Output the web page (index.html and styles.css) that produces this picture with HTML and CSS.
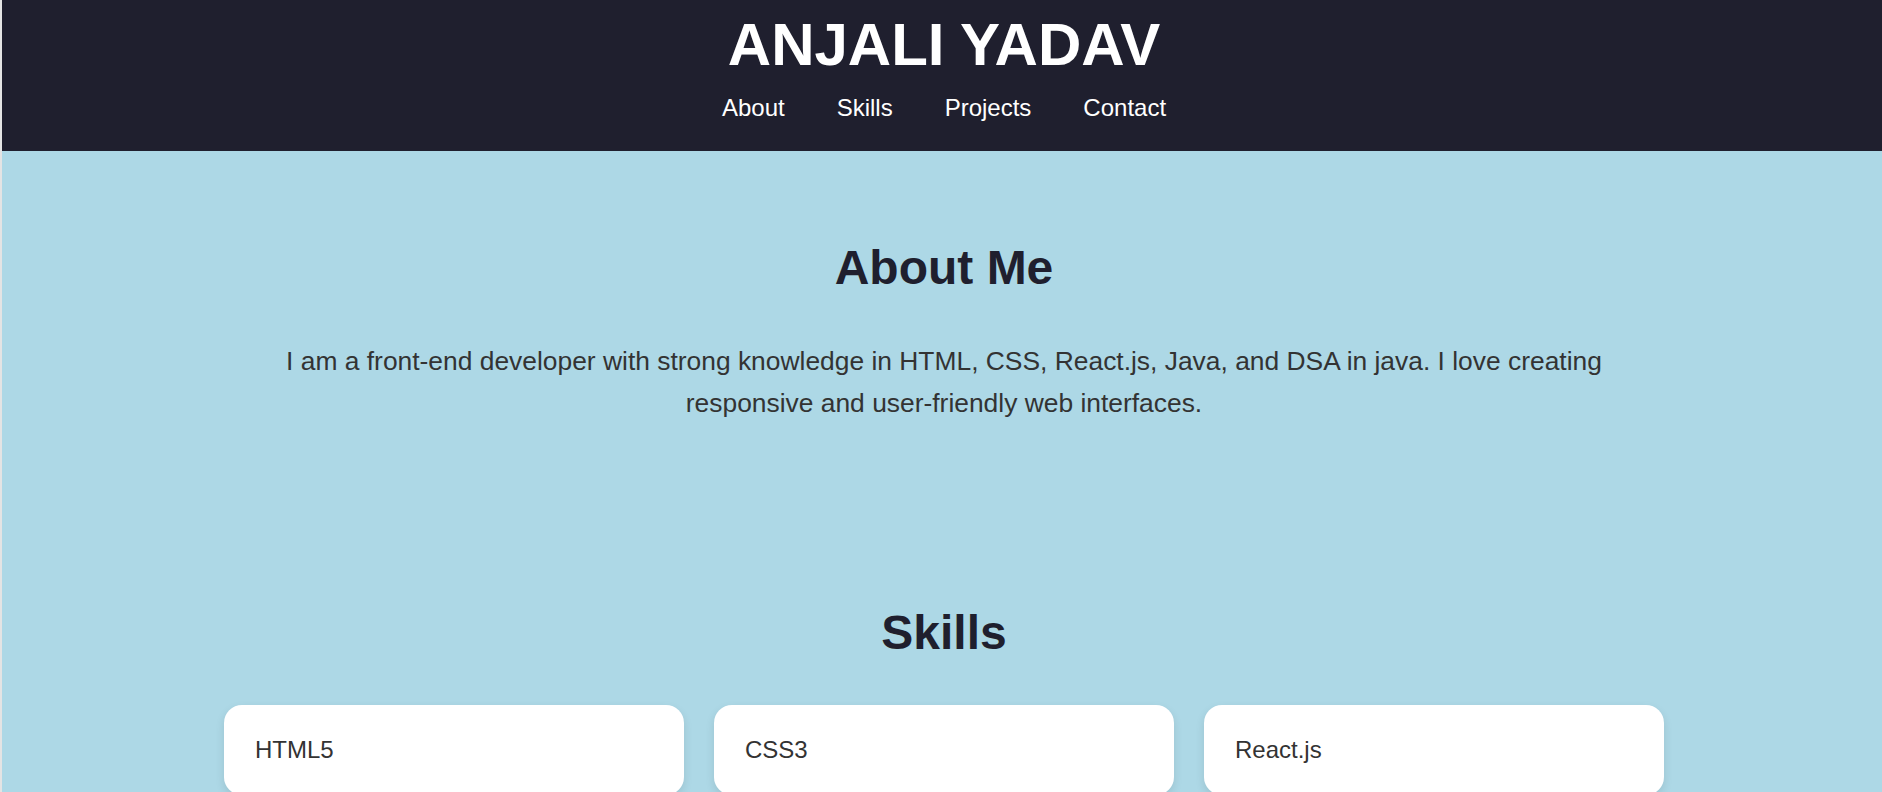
FILE: index.html
```html
<!DOCTYPE html>
<html lang="en">
<head>
    <meta charset="UTF-8">
    <meta name="viewport" content="width=device-width, initial-scale=1.0">
    <title>Anjali Yadav</title>
    <link rel="stylesheet" href="styles.css">
</head>
<body>
    <header class="site-header">
        <h1 class="site-title">ANJALI YADAV</h1>
        <nav class="site-nav">
            <a href="#about">About</a>
            <a href="#skills">Skills</a>
            <a href="#projects">Projects</a>
            <a href="#contact">Contact</a>
        </nav>
    </header>

    <section id="about" class="section">
        <h2>About Me</h2>
        <p class="about-text">I am a front-end developer with strong knowledge in HTML, CSS, React.js, Java, and DSA in java. I love creating responsive and user-friendly web interfaces.</p>
    </section>

    <section id="skills" class="section">
        <h2>Skills</h2>
        <div class="skills-grid">
            <div class="skill-card">HTML5</div>
            <div class="skill-card">CSS3</div>
            <div class="skill-card">React.js</div>
            <div class="skill-card">Java</div>
            <div class="skill-card">DSA in Java</div>
            <div class="skill-card">Git &amp; GitHub</div>
        </div>
    </section>
</body>
</html>
```

FILE: styles.css
```css
html {
    overflow-x: hidden;
}
body {
    margin: 0 -4px 0 0;
    border-left: 2px solid #e4e4e4;
    font-family: "Liberation Sans", Arial, sans-serif;
    background-color: #add8e6;
    color: #333;
}
.site-header {
    background-color: #1f1f2e;
    color: white;
    text-align: center;
    padding: 10px 20px 29px;
}
.site-title {
    margin: 0;
    font-size: 60px;
    line-height: normal;
}
.site-nav {
    display: flex;
    justify-content: center;
    gap: 52px;
    margin-top: 15px;
}
.site-nav a {
    color: white;
    text-decoration: none;
    font-size: 24px;
}
.section {
    padding: 89px 20px 91px;
    text-align: center;
}
.section h2 {
    margin: 0 0 45px;
    font-size: 48px;
    line-height: normal;
    color: #1f1f2e;
}
.about-text {
    max-width: 1400px;
    margin: 0 auto;
    font-size: 26.4px;
    line-height: 1.6;
}
.skills-grid {
    display: grid;
    grid-template-columns: repeat(3, 1fr);
    gap: 30px;
    max-width: 1440px;
    margin: 0 auto;
    text-align: left;
}
.skill-card {
    background-color: white;
    border-radius: 18px;
    padding: 31px;
    font-size: 24px;
    box-shadow: 0 4px 10px rgba(0, 0, 0, 0.1);
}
```
